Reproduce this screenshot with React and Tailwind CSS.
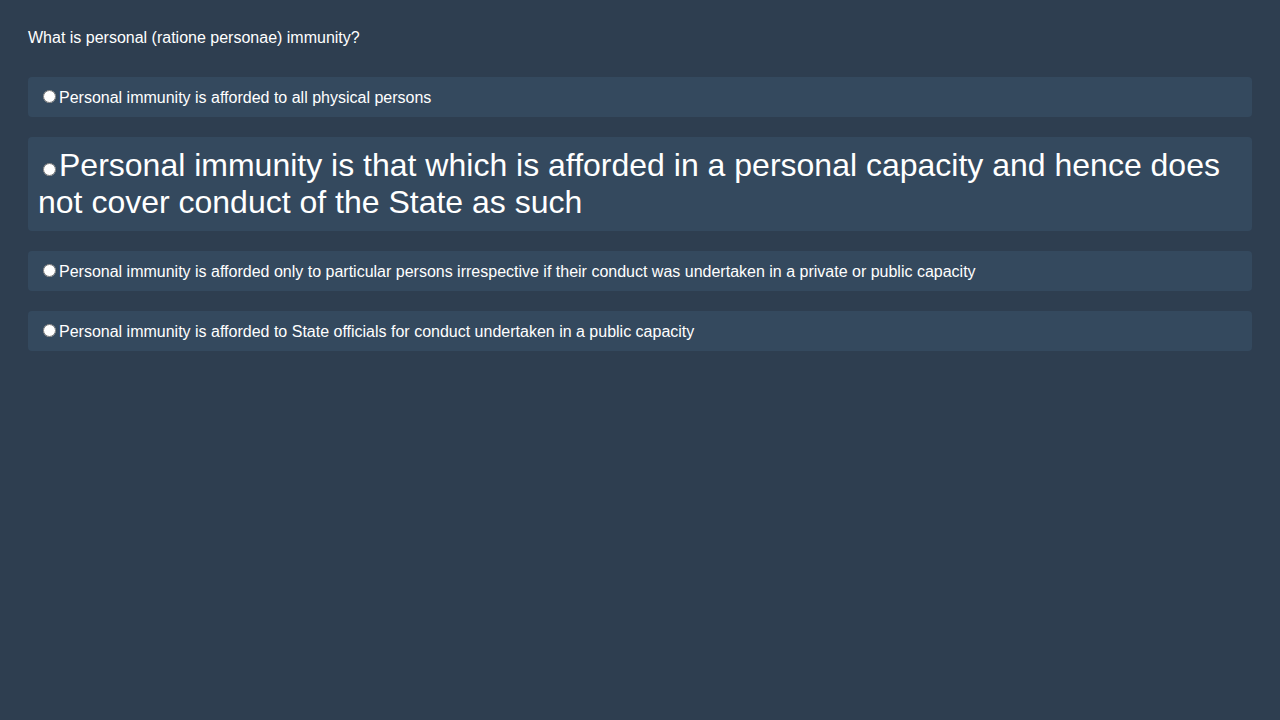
import React from "react";

const options = [
  { text: "Personal immunity is afforded to all physical persons", big: false },
  { text: "Personal immunity is that which is afforded in a personal capacity and hence does not cover conduct of the State as such", big: true },
  { text: "Personal immunity is afforded only to particular persons irrespective if their conduct was undertaken in a private or public capacity", big: false },
  { text: "Personal immunity is afforded to State officials for conduct undertaken in a public capacity", big: false },
];

export default function App() {
  return (
    <div className="min-h-[720px] w-full bg-[#2e3e50] px-[28px] pt-[29px] text-white leading-[normal]" style={{ fontFamily: '"Liberation Sans", Arial, sans-serif' }}>
      <div className="text-[16px] leading-[18px]">What is personal (ratione personae) immunity?</div>
      <div className="mt-[30px] flex flex-col gap-[20px]">
        {options.map((o, i) => (
          <label
            key={i}
            className={`block rounded-[4px] bg-[#34495e] px-[10px] py-[10px] leading-[normal] ${o.big ? "text-[32px]" : "text-[16px]"}`}
          >
            <input type="radio" name="q" className="ml-[5px] mr-[3px] mt-[3px] align-baseline" />
            {o.text}
          </label>
        ))}
      </div>
    </div>
  );
}
